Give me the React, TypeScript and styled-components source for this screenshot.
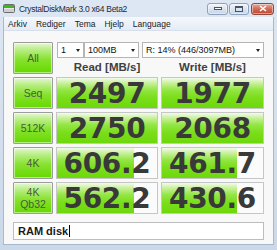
import { Fragment } from 'react';
import styled, { createGlobalStyle } from 'styled-components';

const GlobalStyle = createGlobalStyle`
  html, body {
    margin: 0;
    padding: 0;
    background: #cfdbea;
  }
`;

const Window = styled.div`
  width: 277px;
  height: 250px;
  display: flex;
  flex-direction: column;
  background: linear-gradient(#dde7f3, #cad8e9);
  box-sizing: border-box;
  font-family: 'Liberation Sans', Arial, sans-serif;
  overflow: hidden;
`;

const TitleBar = styled.div`
  height: 17px;
  display: flex;
  align-items: center;
  padding: 0 3px 0 3px;
  box-sizing: border-box;
`;

const TitleText = styled.div`
  flex: 1;
  margin-left: 4px;
  font-size: 8.5px;
  letter-spacing: -0.3px;
  color: #1e2a3a;
  white-space: nowrap;
`;

const CaptionButton = styled.div<{ $close?: boolean; $w: number }>`
  width: ${(p) => p.$w}px;
  height: 12px;
  margin-left: ${(p) => (p.$close ? 2 : 1)}px;
  border-radius: 3px;
  box-sizing: border-box;
  display: flex;
  align-items: center;
  justify-content: center;
  border: 1px solid ${(p) => (p.$close ? '#8f4a3d' : '#8ba1bd')};
  background: ${(p) =>
    p.$close
      ? 'linear-gradient(#e9a898, #d06a55 50%, #c2442e)'
      : 'linear-gradient(#f1f5fa, #dbe4ef 50%, #c7d4e5)'};
  box-shadow: inset 0 0 0 1px rgba(255, 255, 255, 0.45);
`;

const Client = styled.div`
  flex: 1;
  margin: 0 3px 5px 3px;
  display: flex;
  flex-direction: column;
  background: #f8f8f8;
  border: 1px solid #a9b8ca;
  border-top: none;
`;

const MenuBar = styled.div`
  height: 13px;
  display: flex;
  align-items: center;
  gap: 9px;
  padding-left: 4px;
  background: linear-gradient(#f5f8fc, #e4ecf6);
  border-bottom: 1px solid #d6dfea;
  font-size: 8.5px;
  color: #1b1b1b;
`;

const Body = styled.div`
  flex: 1;
  padding: 11px 9px 0 9px;
  display: flex;
  flex-direction: column;
`;

const Grid = styled.div`
  display: grid;
  grid-template-columns: 40px 102px 103px;
  grid-template-rows: 32px repeat(4, 32px);
  gap: 3px;
`;

const ModeButton = styled.div`
  box-sizing: border-box;
  border: 1px solid #9c9c9c;
  border-radius: 1px;
  background: linear-gradient(#e6f7d8 0%, #b9ee85 22%, #86e22e 55%, #66d800 100%);
  box-shadow: inset 0 0 0 1px rgba(255, 255, 255, 0.5);
  display: flex;
  flex-direction: column;
  align-items: center;
  justify-content: center;
  text-align: center;
  font-size: 10.5px;
  line-height: 12px;
  color: #4b5b3b;
`;

const TopRight = styled.div`
  grid-column: 2 / 4;
  display: flex;
  flex-direction: column;
`;

const Selects = styled.div`
  display: flex;
  height: 16px;
  padding-left: 1px;
`;

const Select = styled.div<{ $w: number; $gap?: number }>`
  width: ${(p) => p.$w}px;
  margin-left: ${(p) => p.$gap ?? 0}px;
  box-sizing: border-box;
  border: 1px solid #b5b5b5;
  background: #fff;
  display: flex;
  align-items: center;
  justify-content: space-between;
  padding: 0 3px 0 3px;
  font-size: 9px;
  color: #111;
  white-space: nowrap;
`;

const Arrow = styled.span`
  width: 0;
  height: 0;
  border-left: 2.5px solid transparent;
  border-right: 2.5px solid transparent;
  border-top: 3px solid #222;
`;

const Headers = styled.div`
  flex: 1;
  display: grid;
  grid-template-columns: 102px 103px;
  gap: 3px;
  align-items: center;
`;

const Header = styled.div`
  text-align: center;
  font-weight: bold;
  font-size: 11.5px;
  color: #404040;
  padding-top: 1px;
`;

const Cell = styled.div`
  position: relative;
  box-sizing: border-box;
  border: 1px solid #c6c6c6;
  background: #fbfbfb;
  overflow: hidden;
`;

const Bar = styled.div`
  position: absolute;
  left: 0;
  top: 0;
  bottom: 0;
  background: linear-gradient(#f2fbec 0%, #c6f096 18%, #92e642 40%, #7ade1a 65%, #6ed80c 100%);
`;

const Value = styled.div`
  position: relative;
  height: 100%;
  display: flex;
  align-items: center;
  justify-content: center;
  font-family: 'DejaVu Sans', Verdana, sans-serif;
  font-weight: bold;
  font-size: 28px;
  letter-spacing: -0.3px;
  color: #393939;
`;

const Comment = styled.div`
  margin-top: 8px;
  height: 18px;
  width: 251px;
  box-sizing: border-box;
  border: 1px solid #bdbdbd;
  background: #fff;
  display: flex;
  align-items: center;
  padding-left: 4px;
  font-weight: bold;
  font-size: 11px;
  color: #1a1a1a;
`;

const Caret = styled.span`
  display: inline-block;
  width: 1px;
  height: 12px;
  background: #000;
  margin-left: 1px;
`;

const rows = [
  { label: ['Seq'], read: '2497', write: '1977', rb: 1, wb: 1 },
  { label: ['512K'], read: '2750', write: '2068', rb: 1, wb: 1 },
  { label: ['4K'], read: '606.2', write: '461.7', rb: 0.77, wb: 0.74 },
  { label: ['4K', 'Qb32'], read: '562.2', write: '430.6', rb: 0.77, wb: 0.74 },
];

export default function App() {
  return (
    <>
      <GlobalStyle />
      <Window>
        <TitleBar>
          <svg width="12" height="11" viewBox="0 0 12 11">
            <rect x="0.5" y="1.5" width="11" height="8" rx="1" fill="#e8e8e8" stroke="#6a6a6a" />
            <rect x="1" y="2" width="10" height="3" fill="#3cb81c" />
            <rect x="1" y="6" width="10" height="3" fill="#cfcfcf" />
          </svg>
          <TitleText>CrystalDiskMark 3.0 x64 Beta2</TitleText>
          <CaptionButton $w={21}>
            <svg width="8" height="3" viewBox="0 0 8 3">
              <rect x="0.5" y="0.5" width="7" height="2" fill="#fff" stroke="#44566e" />
            </svg>
          </CaptionButton>
          <CaptionButton $w={20}>
            <svg width="8" height="6" viewBox="0 0 8 6">
              <rect x="0.5" y="0.5" width="7" height="5" fill="none" stroke="#44566e" />
              <rect x="1" y="1" width="6" height="1" fill="#44566e" />
            </svg>
          </CaptionButton>
          <CaptionButton $w={23} $close>
            <svg width="8" height="7" viewBox="0 0 8 7">
              <path d="M1 1 L7 6 M7 1 L1 6" stroke="#fff" strokeWidth="1.6" />
            </svg>
          </CaptionButton>
        </TitleBar>
        <Client>
          <MenuBar>
            <span>Arkiv</span>
            <span>Rediger</span>
            <span>Tema</span>
            <span>Hjelp</span>
            <span>Language</span>
          </MenuBar>
          <Body>
            <Grid>
              <ModeButton>All</ModeButton>
              <TopRight>
                <Selects>
                  <Select $w={27}>
                    1 <Arrow />
                  </Select>
                  <Select $w={55}>
                    100MB <Arrow />
                  </Select>
                  <Select $w={122} $gap={3}>
                    R: 14% (446/3097MB) <Arrow />
                  </Select>
                </Selects>
                <Headers>
                  <Header>Read [MB/s]</Header>
                  <Header>Write [MB/s]</Header>
                </Headers>
              </TopRight>
              {rows.map((r) => (
                <Fragment key={r.label.join()}>
                  <ModeButton>
                    {r.label.map((l) => (
                      <span key={l}>{l}</span>
                    ))}
                  </ModeButton>
                  <Cell>
                    <Bar style={{ width: `${r.rb * 100}%` }} />
                    <Value>{r.read}</Value>
                  </Cell>
                  <Cell>
                    <Bar style={{ width: `${r.wb * 100}%` }} />
                    <Value>{r.write}</Value>
                  </Cell>
                </Fragment>
              ))}
            </Grid>
            <Comment>
              RAM disk
              <Caret />
            </Comment>
          </Body>
        </Client>
      </Window>
    </>
  );
}
